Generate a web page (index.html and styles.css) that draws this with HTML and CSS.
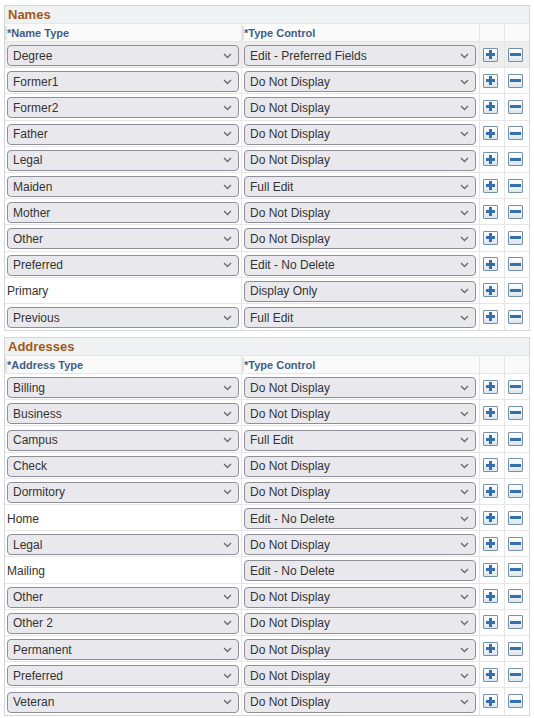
FILE: index.html
```html
<!DOCTYPE html>
<html lang="en">
<head>
<meta charset="utf-8">
<title>Names and Addresses</title>
<link rel="stylesheet" href="styles.css">
</head>
<body>
<div class="page">
  <section class="group">
    <div class="group-title">Names</div>
    <div class="row head">
      <div class="cell c1"><span class="handle"></span>*Name Type</div>
      <div class="cell c2"><span class="handle"></span>*Type Control</div>
      <div class="cell c3"></div>
      <div class="cell c4"></div>
    </div>
    <div id="names"></div>
  </section>
  <section class="group">
    <div class="group-title">Addresses</div>
    <div class="row head">
      <div class="cell c1"><span class="handle"></span>*Address Type</div>
      <div class="cell c2"><span class="handle"></span>*Type Control</div>
      <div class="cell c3"></div>
      <div class="cell c4"></div>
    </div>
    <div id="addresses"></div>
  </section>
</div>
<script src="app.js"></script>
</body>
</html>
```

FILE: styles.css
```css
* { box-sizing: border-box; }
html, body { margin: 0; padding: 0; background: #fff; }
body {
  font-family: "Liberation Sans", Arial, sans-serif;
  font-size: 12px;
  color: #333;
}
.page {
  padding: 5px 5px 0 4px;
  display: flex;
  flex-direction: column;
  gap: 6px;
}
.group {
  border: 1px solid #d2d7d7;
  width: 526px;
}
.group-title {
  height: 18px;
  line-height: 17px;
  padding-left: 3px;
  font-size: 13px;
  font-weight: bold;
  color: #a3581b;
  background: #eff2f2;
  border-bottom: 1px solid #e4e7e7;
}
.row {
  display: grid;
  grid-template-columns: 237px 238px 25px 24px;
  border-bottom: 1px solid #e6e6e6;
}
.row:last-child { border-bottom: none; }
.row.head {
  height: 18px;
  background: #fafafa;
  border-bottom: 1px solid #e6e6e6;
}
.row.data { height: 26.2px; }
.row.data.active { background: #eeeeee; }
.cell {
  display: flex;
  align-items: center;
  border-right: 1px solid #e6e6e6;
  min-width: 0;
}
.c4 { border-right: none; }
.head .cell {
  font-size: 11px;
  font-weight: bold;
  color: #3e5e86;
}
.handle {
  width: 2px;
  height: 14px;
  background: #e2e2e2;
}
.data .c1, .data .c2 { padding-left: 2px; padding-top: 2px; }
.data .c3, .data .c4 { padding-left: 3px; }
.plain { color: #333; }
.select {
  width: 232px;
  height: 21px;
  border: 1px solid #8f8f99;
  border-radius: 4px;
  background: #e9e9ed;
  display: flex;
  align-items: center;
  justify-content: space-between;
  padding: 0 6px 0 5px;
  color: #333;
  white-space: nowrap;
}
.select svg { flex: none; }
.btn {
  width: 15px;
  height: 14px;
  border: 1px solid #7590a8;
  border-radius: 1px;
  background: linear-gradient(#ffffff, #dde6ed);
  display: flex;
  align-items: center;
  justify-content: center;
}
```

FILE: app.js
```js
const names = [
  ["Degree", "Edit - Preferred Fields", true],
  ["Former1", "Do Not Display"],
  ["Former2", "Do Not Display"],
  ["Father", "Do Not Display"],
  ["Legal", "Do Not Display"],
  ["Maiden", "Full Edit"],
  ["Mother", "Do Not Display"],
  ["Other", "Do Not Display"],
  ["Preferred", "Edit - No Delete"],
  ["*Primary", "Display Only"],
  ["Previous", "Full Edit"]
];
const addresses = [
  ["Billing", "Do Not Display"],
  ["Business", "Do Not Display"],
  ["Campus", "Full Edit"],
  ["Check", "Do Not Display"],
  ["Dormitory", "Do Not Display"],
  ["*Home", "Edit - No Delete"],
  ["Legal", "Do Not Display"],
  ["*Mailing", "Edit - No Delete"],
  ["Other", "Do Not Display"],
  ["Other 2", "Do Not Display"],
  ["Permanent", "Do Not Display"],
  ["Preferred", "Do Not Display"],
  ["Veteran", "Do Not Display"]
];
const chev = '<svg width="9" height="6" viewBox="0 0 9 6"><path d="M1 1 L4.5 4.5 L8 1" fill="none" stroke="#6b6b6b" stroke-width="1.4"/></svg>';
const plus = '<svg width="9" height="9" viewBox="0 0 9 9"><rect x="3" y="0" width="3" height="9" fill="#3470ab"/><rect x="0" y="3" width="9" height="3" fill="#3470ab"/></svg>';
const minus = '<svg width="11" height="3" viewBox="0 0 11 3"><rect x="0" y="0" width="11" height="3" fill="#3470ab"/></svg>';
function sel(t) { return '<div class="select"><span>' + t + '</span>' + chev + '</div>'; }
function build(id, rows) {
  const el = document.getElementById(id);
  el.innerHTML = rows.map(r => {
    const plain = r[0].startsWith("*");
    const first = plain ? '<span class="plain">' + r[0].slice(1) + '</span>' : sel(r[0]);
    return '<div class="row data' + (r[2] ? ' active' : '') + '">' +
      '<div class="cell c1">' + first + '</div>' +
      '<div class="cell c2">' + sel(r[1]) + '</div>' +
      '<div class="cell c3"><span class="btn">' + plus + '</span></div>' +
      '<div class="cell c4"><span class="btn">' + minus + '</span></div>' +
      '</div>';
  }).join("");
}
build("names", names);
build("addresses", addresses);
```
